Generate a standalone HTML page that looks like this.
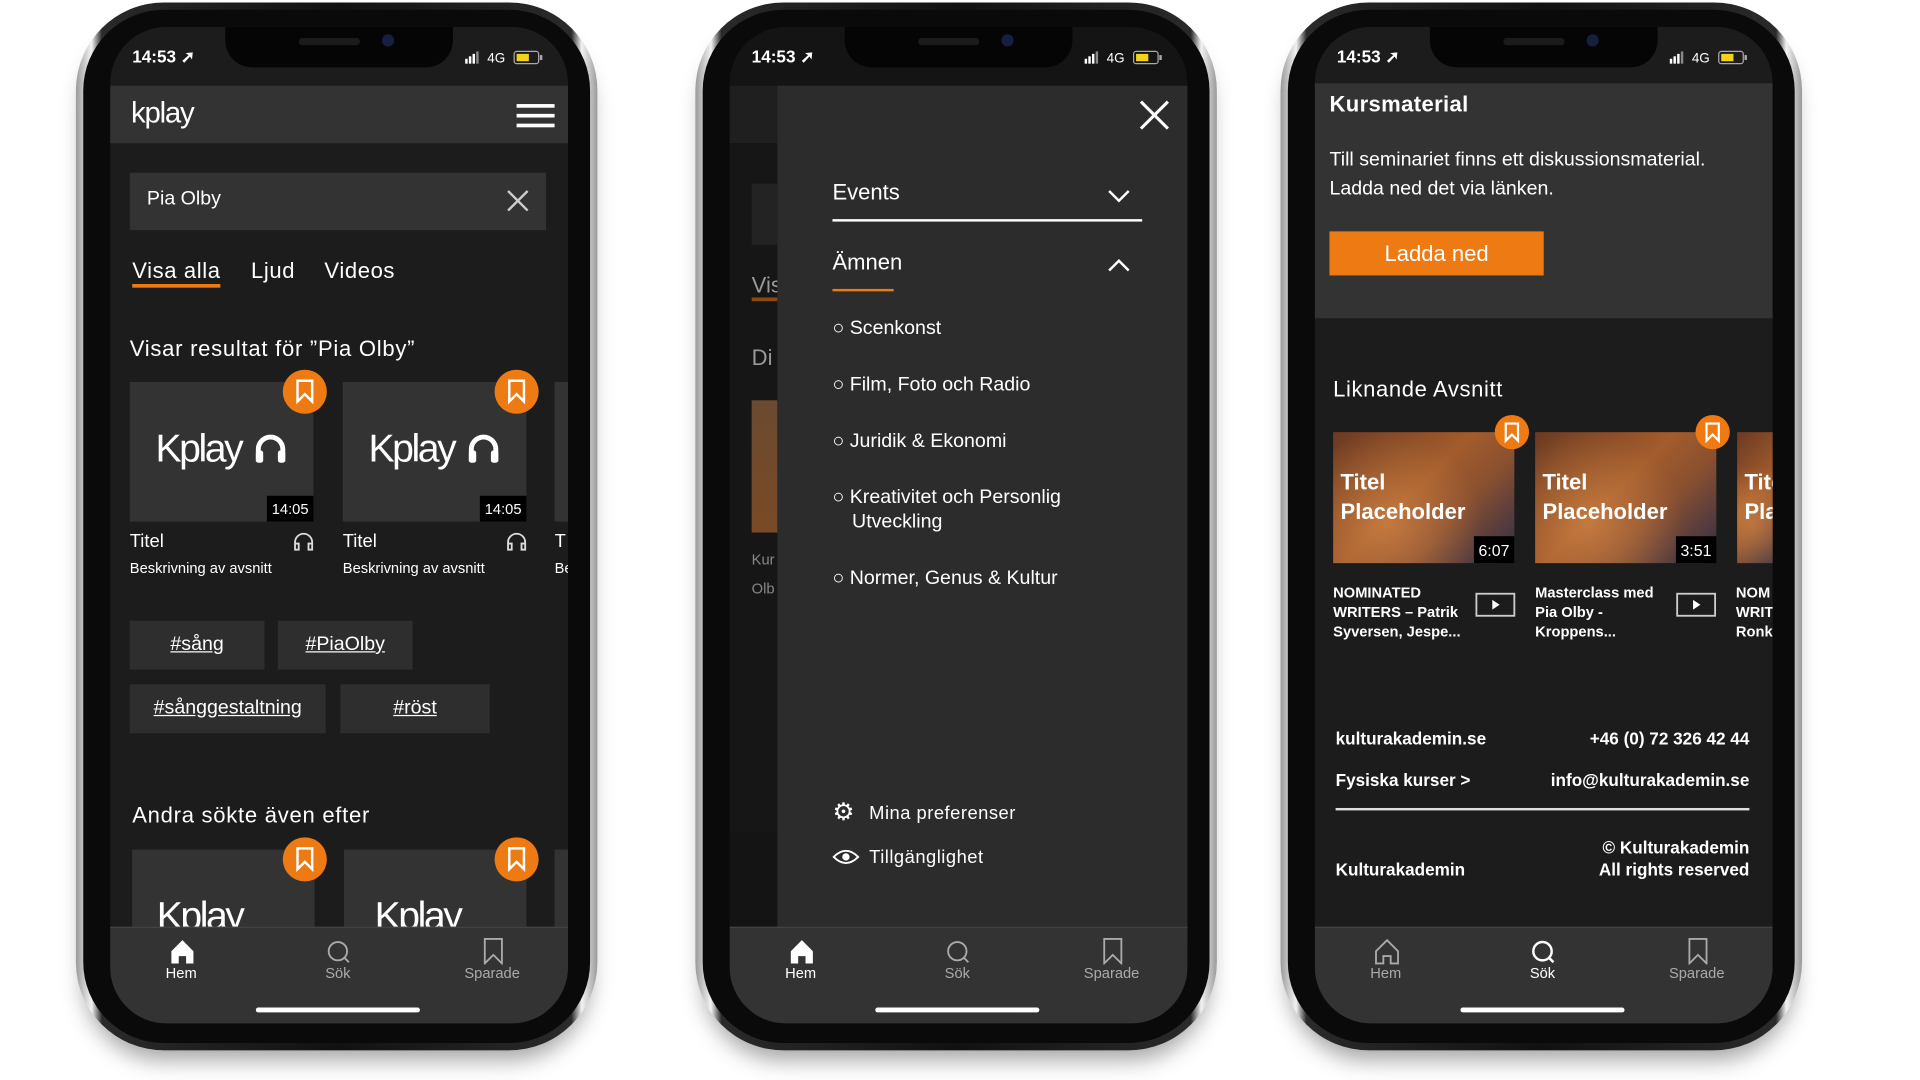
<!DOCTYPE html>
<html><head><meta charset="utf-8"><style>
*{margin:0;padding:0;box-sizing:border-box}
html,body{width:1920px;height:1080px;background:#fff;overflow:hidden}
#stage{position:absolute;left:0;top:0;width:1546px;height:870px;transform:scale(1.2242);transform-origin:0 0;font-family:"Liberation Sans",sans-serif}
.a{position:absolute}
.t{position:absolute;white-space:nowrap;line-height:1;color:#fff}
.phone{position:absolute;top:2px;width:426px;height:856px;border-radius:72px;background:linear-gradient(90deg,#9a9a9a,#f2f2f2 3%,#2a2a2a 5%,#111 50%,#2a2a2a 95%,#f2f2f2 97%,#9a9a9a);box-shadow:0 14px 18px -6px rgba(0,0,0,.35)}
.phone::before{content:"";position:absolute;left:6px;top:6px;right:6px;bottom:6px;border-radius:66px;background:#0a0a0a}
.screen{position:absolute;top:22px;width:374px;height:814px;border-radius:46px;overflow:hidden;background:#1c1c1c}
.notch{position:absolute;left:94px;top:0;width:186px;height:33px;background:#050505;border-radius:0 0 22px 22px}
.notch::before{content:"";position:absolute;left:60px;top:9px;width:50px;height:6px;border-radius:3px;background:#1b1b1b}
.notch::after{content:"";position:absolute;left:128px;top:6px;width:10px;height:10px;border-radius:5px;background:#152040}
.nav{position:absolute;left:0;top:735px;width:374px;height:79px;background:#333;border-top:1px solid #444}
.nav .t{font-size:12px;top:31px;color:#aaa;transform:translateX(-50%)}
.home{position:absolute;left:119px;top:801px;width:134px;height:4px;border-radius:2px;background:#fff}
.bm{position:absolute;width:36px;height:36px;border-radius:18px;background:#ee7a14}
.card{position:absolute;background:#333}
.dur{position:absolute;right:0;bottom:0;background:#000;color:#fff;font-size:12px;padding:5px 4px 4px;line-height:1}
.tag{position:absolute;height:40px;background:#2e2e2e;color:#fff;font-size:16px;text-decoration:underline;text-align:center;line-height:40px}
.sb{position:absolute;top:17px;right:16px;width:70px;height:14px}
.vid{position:absolute;width:148px;height:107px;background:radial-gradient(circle at 30% 70%,rgba(230,150,80,.5),transparent 60%),linear-gradient(135deg,#6b3a22,#a35c2c 45%,#8a5030 65%,#2b2c48)}
.vid .t{font-size:18px;font-weight:bold;left:6px}
</style></head><body><div id="stage">

<!-- PHONE 1 -->
<div class="phone" style="left:62px"></div>
<div class="screen" style="left:90px">
  <div class="notch"></div>
  <div class="t" style="left:18px;top:17px;font-size:14px;font-weight:bold">14:53 ➚</div>
  <svg class="sb" viewBox="0 0 70 14"><rect x="2" y="9" width="2" height="4" fill="#fff"/><rect x="5" y="7" width="2" height="6" fill="#fff"/><rect x="8" y="5" width="2" height="8" fill="#fff"/><rect x="11" y="3" width="2" height="10" fill="#888"/><text x="20" y="12" fill="#fff" font-size="11" font-family="Liberation Sans">4G</text><rect x="42" y="3" width="20" height="10" rx="2" fill="none" stroke="#aaa"/><rect x="44" y="5" width="10" height="6" fill="#f2d21a"/><rect x="63" y="6" width="2" height="4" fill="#aaa"/></svg>
  <div class="a" style="left:0;top:48px;width:374px;height:47px;background:#333"></div>
  <div class="t" style="left:17px;top:59px;font-size:24px;letter-spacing:-1px">kplay</div>
  <div class="a" style="left:332px;top:63px;width:31px;height:3px;background:#fff"></div>
  <div class="a" style="left:332px;top:71px;width:31px;height:3px;background:#fff"></div>
  <div class="a" style="left:332px;top:79px;width:31px;height:3px;background:#fff"></div>
  <div class="a" style="left:16px;top:119px;width:340px;height:47px;background:#333"></div>
  <div class="t" style="left:30px;top:133px;font-size:16px">Pia Olby</div>
  <svg class="a" style="left:324px;top:133px" width="18" height="18"><path d="M1 1L17 17M17 1L1 17" stroke="#ccc" stroke-width="2"/></svg>
  <div class="t" style="left:18px;top:190px;font-size:18px;letter-spacing:.5px">Visa alla</div>
  <div class="t" style="left:115px;top:190px;font-size:18px;letter-spacing:.5px">Ljud</div>
  <div class="t" style="left:175px;top:190px;font-size:18px;letter-spacing:.5px">Videos</div>
  <div class="a" style="left:18px;top:210px;width:72px;height:3px;background:#ee7a14"></div>
  <div class="t" style="left:16px;top:254px;font-size:18px;letter-spacing:.6px">Visar resultat för ”Pia Olby”</div>
  <div class="card" style="left:16px;top:290px;width:150px;height:114px"><div class="t" style="left:21px;top:38px;font-size:32px;letter-spacing:-2px">Kplay</div><svg class="a" style="left:101px;top:41px" width="28" height="26"><path d="M4 24V14a10 10 0 0 1 20 0v10" fill="none" stroke="#fff" stroke-width="4"/><rect x="2" y="15" width="6" height="10" rx="2" fill="#fff"/><rect x="20" y="15" width="6" height="10" rx="2" fill="#fff"/></svg><div class="dur">14:05</div></div>
  <div class="card" style="left:190px;top:290px;width:150px;height:114px"><div class="t" style="left:21px;top:38px;font-size:32px;letter-spacing:-2px">Kplay</div><svg class="a" style="left:101px;top:41px" width="28" height="26"><path d="M4 24V14a10 10 0 0 1 20 0v10" fill="none" stroke="#fff" stroke-width="4"/><rect x="2" y="15" width="6" height="10" rx="2" fill="#fff"/><rect x="20" y="15" width="6" height="10" rx="2" fill="#fff"/></svg><div class="dur">14:05</div></div>
  <div class="card" style="left:363px;top:290px;width:20px;height:114px"></div>
  <div class="bm" style="left:141px;top:280px"><svg width="36" height="36"><path d="M12 9h12v17l-6-6-6 6z" fill="none" stroke="#fff" stroke-width="2"/></svg></div>
  <div class="bm" style="left:314px;top:280px"><svg width="36" height="36"><path d="M12 9h12v17l-6-6-6 6z" fill="none" stroke="#fff" stroke-width="2"/></svg></div>
  <div class="t" style="left:16px;top:413px;font-size:15px">Titel</div>
  <div class="t" style="left:190px;top:413px;font-size:15px">Titel</div>
  <div class="t" style="left:363px;top:413px;font-size:15px">T</div>
  <svg class="a" style="left:149px;top:412px" width="18" height="16"><path d="M2 14V9a7 7 0 0 1 14 0v5M2 10h3v5H2zM13 10h3v5h-3z" fill="none" stroke="#ddd" stroke-width="1.5"/></svg>
  <svg class="a" style="left:323px;top:412px" width="18" height="16"><path d="M2 14V9a7 7 0 0 1 14 0v5M2 10h3v5H2zM13 10h3v5h-3z" fill="none" stroke="#ddd" stroke-width="1.5"/></svg>
  <div class="t" style="left:16px;top:436px;font-size:12px">Beskrivning av avsnitt</div>
  <div class="t" style="left:190px;top:436px;font-size:12px">Beskrivning av avsnitt</div>
  <div class="t" style="left:363px;top:436px;font-size:12px">Be</div>
  <div class="tag" style="left:16px;top:485px;width:110px">#sång</div>
  <div class="tag" style="left:137px;top:485px;width:110px">#PiaOlby</div>
  <div class="tag" style="left:16px;top:537px;width:160px">#sånggestaltning</div>
  <div class="tag" style="left:188px;top:537px;width:122px">#röst</div>
  <div class="t" style="left:18px;top:635px;font-size:18px;letter-spacing:.6px">Andra sökte även efter</div>
  <div class="card" style="left:18px;top:672px;width:149px;height:80px"><div class="t" style="left:20px;top:38px;font-size:32px;letter-spacing:-2px">Kplay</div></div>
  <div class="card" style="left:191px;top:672px;width:149px;height:80px"><div class="t" style="left:25px;top:38px;font-size:32px;letter-spacing:-2px">Kplay</div></div>
  <div class="card" style="left:363px;top:672px;width:20px;height:80px"></div>
  <div class="bm" style="left:141px;top:662px"><svg width="36" height="36"><path d="M12 9h12v17l-6-6-6 6z" fill="none" stroke="#fff" stroke-width="2"/></svg></div>
  <div class="bm" style="left:314px;top:662px"><svg width="36" height="36"><path d="M12 9h12v17l-6-6-6 6z" fill="none" stroke="#fff" stroke-width="2"/></svg></div>
  <div class="nav">
    <svg class="a" style="left:48px;top:8px" width="22" height="22"><path d="M2 11L11 2l9 9v10h-6v-6h-6v6H2z" fill="#fff"/></svg>
    <svg class="a" style="left:176px;top:9px" width="22" height="22"><circle cx="10" cy="10" r="7.5" fill="none" stroke="#aaa" stroke-width="1.5"/><path d="M15 15l4 4" stroke="#aaa" stroke-width="1.5"/></svg>
    <svg class="a" style="left:302px;top:8px" width="22" height="22"><path d="M4 1h14v20l-7-7-7 7z" fill="none" stroke="#aaa" stroke-width="1.5"/></svg>
    <div class="t" style="left:58px;color:#fff">Hem</div><div class="t" style="left:186px">Sök</div><div class="t" style="left:312px">Sparade</div>
  </div>
  <div class="home"></div>
</div>

<!-- PHONE 2 -->
<div class="phone" style="left:568px"></div>
<div class="screen" style="left:596px;background:#141414">
  <div class="notch"></div>
  <div class="t" style="left:18px;top:17px;font-size:14px;font-weight:bold">14:53 ➚</div>
  <svg class="sb" viewBox="0 0 70 14"><rect x="2" y="9" width="2" height="4" fill="#fff"/><rect x="5" y="7" width="2" height="6" fill="#fff"/><rect x="8" y="5" width="2" height="8" fill="#fff"/><rect x="11" y="3" width="2" height="10" fill="#888"/><text x="20" y="12" fill="#fff" font-size="11" font-family="Liberation Sans">4G</text><rect x="42" y="3" width="20" height="10" rx="2" fill="none" stroke="#aaa"/><rect x="44" y="5" width="10" height="6" fill="#f2d21a"/><rect x="63" y="6" width="2" height="4" fill="#aaa"/></svg>
  <div class="a" style="left:0;top:48px;width:39px;height:47px;background:#1f1f1f"></div>
  <div class="a" style="left:0;top:95px;width:39px;height:563px;background:#161616"></div>
  <div class="a" style="left:18px;top:128px;width:21px;height:50px;background:#232323"></div>
  <div class="t" style="left:18px;top:202px;font-size:18px;color:#999">Vis</div>
  <div class="a" style="left:18px;top:221px;width:21px;height:3px;background:#8a4a10"></div>
  <div class="t" style="left:18px;top:261px;font-size:18px;color:#999">Di</div>
  <div class="a" style="left:18px;top:305px;width:21px;height:108px;background:linear-gradient(#6a4a30,#7a4a25)"></div>
  <div class="t" style="left:18px;top:429px;font-size:12px;color:#888">Kur</div>
  <div class="t" style="left:18px;top:453px;font-size:12px;color:#888">Olb</div>
  <div class="a" style="left:39px;top:48px;width:335px;height:700px;background:#2c2c2c"></div>
  <svg class="a" style="left:335px;top:60px" width="24" height="24"><path d="M1 1L23 23M23 1L1 23" stroke="#fff" stroke-width="2.5"/></svg>
  <div class="t" style="left:84px;top:126px;font-size:18px">Events</div>
  <svg class="a" style="left:309px;top:132px" width="18" height="12"><path d="M1 2l8 8 8-8" fill="none" stroke="#fff" stroke-width="2"/></svg>
  <div class="a" style="left:84px;top:157px;width:253px;height:2px;background:#fff"></div>
  <div class="t" style="left:84px;top:183px;font-size:18px">Ämnen</div>
  <svg class="a" style="left:309px;top:189px" width="18" height="12"><path d="M1 10l8-8 8 8" fill="none" stroke="#fff" stroke-width="2"/></svg>
  <div class="a" style="left:84px;top:214px;width:50px;height:2px;background:#ee7a14"></div>
  <div class="t" style="left:84px;top:239px;font-size:16px">○ Scenkonst</div>
  <div class="t" style="left:84px;top:285px;font-size:16px">○ Film, Foto och Radio</div>
  <div class="t" style="left:84px;top:331px;font-size:16px">○ Juridik &amp; Ekonomi</div>
  <div class="t" style="left:84px;top:377px;font-size:16px">○ Kreativitet och Personlig</div>
  <div class="t" style="left:100px;top:397px;font-size:16px">Utveckling</div>
  <div class="t" style="left:84px;top:443px;font-size:16px">○ Normer, Genus &amp; Kultur</div>
  <div class="t" style="left:84px;top:632px;font-size:20px">⚙</div>
  <div class="t" style="left:114px;top:635px;font-size:15px;letter-spacing:.4px">Mina preferenser</div>
  <svg class="a" style="left:84px;top:671px" width="22" height="14"><path d="M1 7Q11-3 21 7Q11 17 1 7z" fill="none" stroke="#fff" stroke-width="1.5"/><circle cx="11" cy="7" r="3" fill="#fff"/></svg>
  <div class="t" style="left:114px;top:671px;font-size:15px;letter-spacing:.4px">Tillgänglighet</div>
  <div class="nav">
    <svg class="a" style="left:48px;top:8px" width="22" height="22"><path d="M2 11L11 2l9 9v10h-6v-6h-6v6H2z" fill="#fff"/></svg>
    <svg class="a" style="left:176px;top:9px" width="22" height="22"><circle cx="10" cy="10" r="7.5" fill="none" stroke="#aaa" stroke-width="1.5"/><path d="M15 15l4 4" stroke="#aaa" stroke-width="1.5"/></svg>
    <svg class="a" style="left:302px;top:8px" width="22" height="22"><path d="M4 1h14v20l-7-7-7 7z" fill="none" stroke="#aaa" stroke-width="1.5"/></svg>
    <div class="t" style="left:58px;color:#fff">Hem</div><div class="t" style="left:186px">Sök</div><div class="t" style="left:312px">Sparade</div>
  </div>
  <div class="home"></div>
</div>

<!-- PHONE 3 -->
<div class="phone" style="left:1046px"></div>
<div class="screen" style="left:1074px">
  <div class="notch"></div>
  <div class="t" style="left:18px;top:17px;font-size:14px;font-weight:bold">14:53 ➚</div>
  <svg class="sb" viewBox="0 0 70 14"><rect x="2" y="9" width="2" height="4" fill="#fff"/><rect x="5" y="7" width="2" height="6" fill="#fff"/><rect x="8" y="5" width="2" height="8" fill="#fff"/><rect x="11" y="3" width="2" height="10" fill="#888"/><text x="20" y="12" fill="#fff" font-size="11" font-family="Liberation Sans">4G</text><rect x="42" y="3" width="20" height="10" rx="2" fill="none" stroke="#aaa"/><rect x="44" y="5" width="10" height="6" fill="#f2d21a"/><rect x="63" y="6" width="2" height="4" fill="#aaa"/></svg>
  <div class="a" style="left:0;top:46px;width:374px;height:192px;background:#333"></div>
  <div class="t" style="left:12px;top:54px;font-size:18px;font-weight:bold;letter-spacing:.3px">Kursmaterial</div>
  <div class="t" style="left:12px;top:101px;font-size:16px">Till seminariet finns ett diskussionsmaterial.</div>
  <div class="t" style="left:12px;top:125px;font-size:16px">Ladda ned det via länken.</div>
  <div class="a" style="left:12px;top:167px;width:175px;height:36px;background:#ee7a14;color:#fff;font-size:18px;text-align:center;line-height:36px">Ladda ned</div>
  <div class="t" style="left:15px;top:287px;font-size:18px;letter-spacing:.5px">Liknande Avsnitt</div>
  <div class="vid" style="left:15px;top:331px"><div class="t" style="top:32px">Titel</div><div class="t" style="top:56px">Placeholder</div><div class="dur" style="font-size:13px">6:07</div></div>
  <div class="vid" style="left:180px;top:331px"><div class="t" style="top:32px">Titel</div><div class="t" style="top:56px">Placeholder</div><div class="dur" style="font-size:13px">3:51</div></div>
  <div class="vid" style="left:345px;top:331px;width:40px"><div class="t" style="top:32px">Titel</div><div class="t" style="top:56px">Placeholder</div></div>
  <div class="bm" style="left:147px;top:317px;width:28px;height:28px"><svg width="28" height="28"><path d="M9 7h10v14l-5-5-5 5z" fill="none" stroke="#fff" stroke-width="1.8"/></svg></div>
  <div class="bm" style="left:311px;top:317px;width:28px;height:28px"><svg width="28" height="28"><path d="M9 7h10v14l-5-5-5 5z" fill="none" stroke="#fff" stroke-width="1.8"/></svg></div>
  <div class="t" style="left:15px;top:454px;font-size:12px;font-weight:bold;line-height:16px">NOMINATED<br>WRITERS – Patrik<br>Syversen, Jespe...</div>
  <div class="t" style="left:180px;top:454px;font-size:12px;font-weight:bold;line-height:16px">Masterclass med<br>Pia Olby -<br>Kroppens...</div>
  <div class="t" style="left:344px;top:454px;font-size:12px;font-weight:bold;line-height:16px">NOM<br>WRIT<br>Ronk</div>
  <svg class="a" style="left:131px;top:462px" width="33" height="20"><rect x="1" y="1" width="31" height="18" fill="none" stroke="#ccc" stroke-width="1.5"/><path d="M14 6v8l6-4z" fill="#fff"/></svg>
  <svg class="a" style="left:295px;top:462px" width="33" height="20"><rect x="1" y="1" width="31" height="18" fill="none" stroke="#ccc" stroke-width="1.5"/><path d="M14 6v8l6-4z" fill="#fff"/></svg>
  <div class="t" style="left:17px;top:574px;font-size:14px;font-weight:bold">kulturakademin.se</div>
  <div class="t" style="right:19px;top:574px;font-size:14px;font-weight:bold">+46 (0) 72 326 42 44</div>
  <div class="t" style="left:17px;top:608px;font-size:14px;font-weight:bold">Fysiska kurser &gt;</div>
  <div class="t" style="right:19px;top:608px;font-size:14px;font-weight:bold">info@kulturakademin.se</div>
  <div class="a" style="left:17px;top:638px;width:338px;height:2px;background:#ddd"></div>
  <div class="t" style="left:17px;top:681px;font-size:14px;font-weight:bold">Kulturakademin</div>
  <div class="t" style="right:19px;top:663px;font-size:14px;font-weight:bold">© Kulturakademin</div>
  <div class="t" style="right:19px;top:681px;font-size:14px;font-weight:bold">All rights reserved</div>
  <div class="nav">
    <svg class="a" style="left:48px;top:8px" width="22" height="22"><path d="M2 11L11 2l9 9v10h-6v-6h-6v6H2z" fill="none" stroke="#aaa" stroke-width="1.5"/></svg>
    <svg class="a" style="left:176px;top:9px" width="22" height="22"><circle cx="10" cy="10" r="7.5" fill="none" stroke="#fff" stroke-width="2"/><path d="M15 15l4 4" stroke="#fff" stroke-width="2"/></svg>
    <svg class="a" style="left:302px;top:8px" width="22" height="22"><path d="M4 1h14v20l-7-7-7 7z" fill="none" stroke="#aaa" stroke-width="1.5"/></svg>
    <div class="t" style="left:58px">Hem</div><div class="t" style="left:186px;color:#fff">Sök</div><div class="t" style="left:312px">Sparade</div>
  </div>
  <div class="home"></div>
</div>

</div></body></html>
